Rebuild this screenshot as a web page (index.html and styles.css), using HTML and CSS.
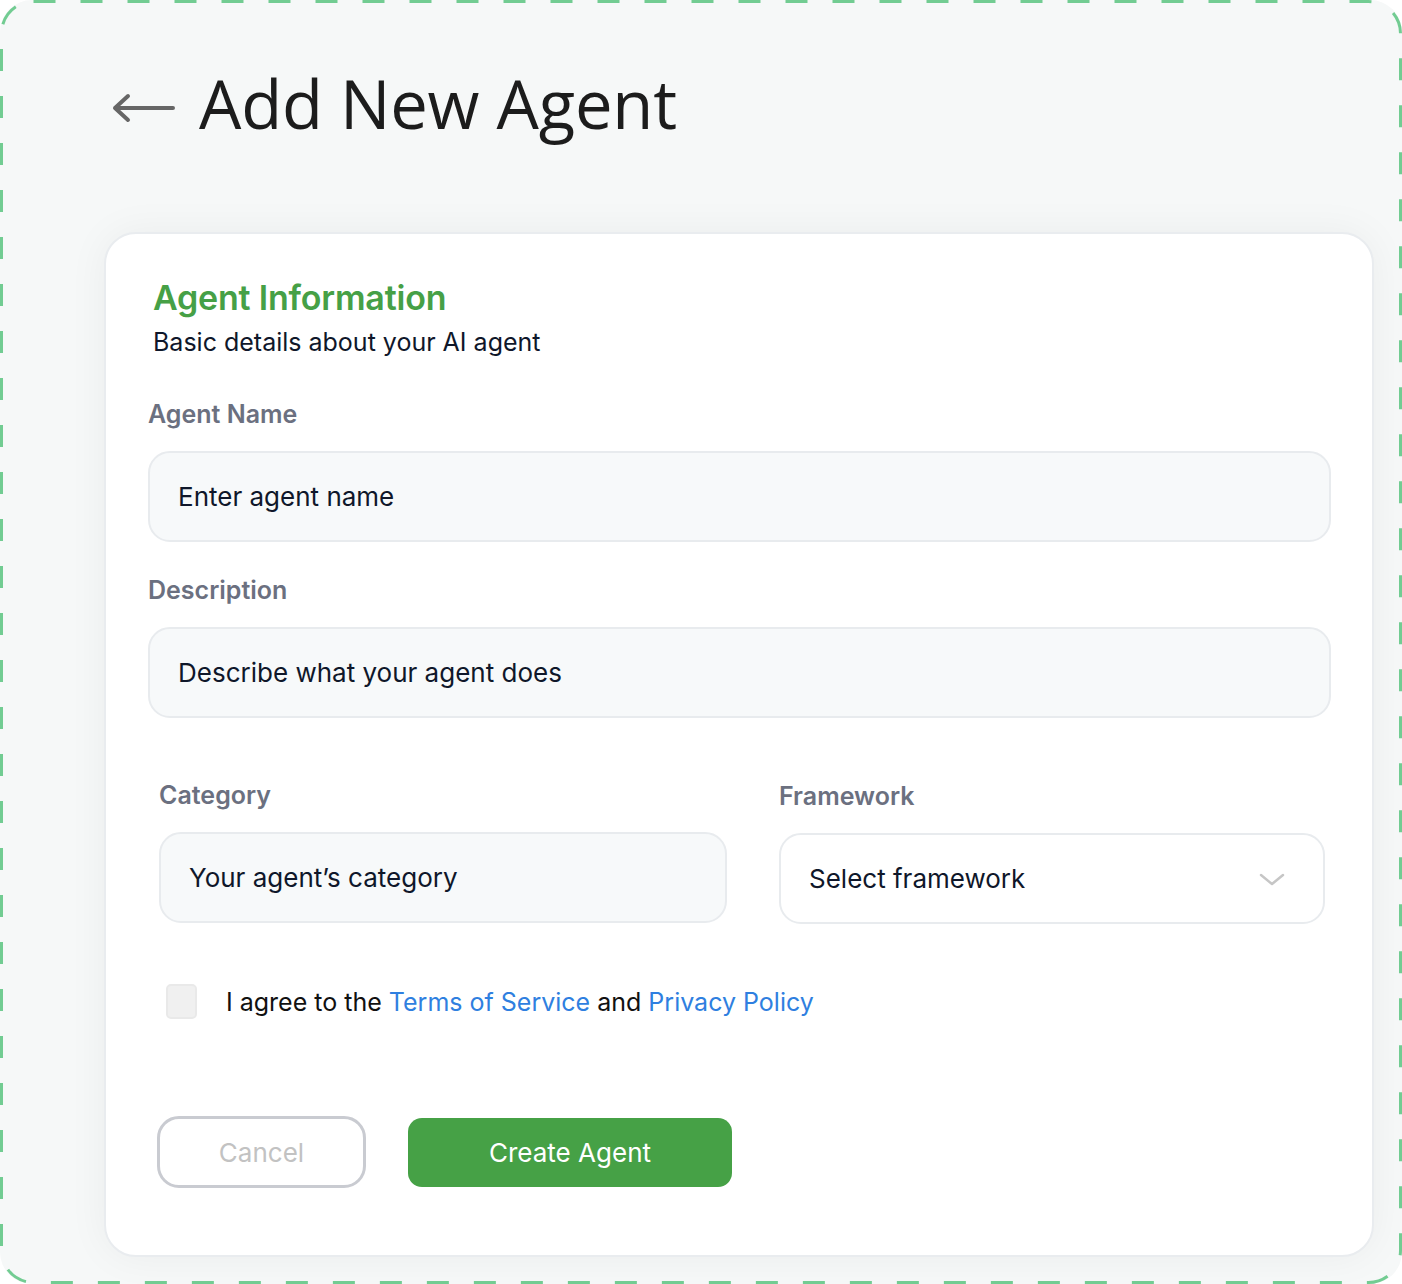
FILE: index.html
```html
<!DOCTYPE html>
<html lang="en">
<head>
<meta charset="utf-8">
<title>Add New Agent</title>
<link rel="stylesheet" href="styles.css">
</head>
<body>
<div class="frame">
  <svg class="frame-border" width="1402" height="1284" viewBox="0 0 1402 1284" aria-hidden="true">
    <rect x="1.5" y="1.5" width="1399" height="1281" rx="32" ry="32" fill="none" stroke="#72cc92" stroke-width="3" stroke-dasharray="22 25"/>
  </svg>
  <header class="page-header">
    <svg class="back-arrow" width="64" height="30" viewBox="0 0 64 30" aria-hidden="true">
      <path d="M3 15 H61 M3 15 L16 3 M3 15 L16 27" fill="none" stroke="#666" stroke-width="4" stroke-linecap="round" stroke-linejoin="round"/>
    </svg>
    <h1 class="page-title">Add New Agent</h1>
  </header>

  <section class="card">
    <div class="card-head">
      <h2 class="card-title">Agent Information</h2>
      <p class="card-sub">Basic details about your AI agent</p>
    </div>

    <div class="field">
      <label class="label">Agent Name</label>
      <div class="input">Enter agent name</div>
    </div>

    <div class="field">
      <label class="label">Description</label>
      <div class="input">Describe what your agent does</div>
    </div>

    <div class="row">
      <div class="col col-cat">
        <label class="label">Category</label>
        <div class="input">Your agent’s category</div>
      </div>
      <div class="col col-fw">
        <label class="label">Framework</label>
        <div class="input select">
          <span>Select framework</span>
          <svg width="26" height="14" viewBox="0 0 26 14" aria-hidden="true">
            <path d="M2 2 L13 11 L24 2" fill="none" stroke="#c6c6c6" stroke-width="2.5" stroke-linecap="round" stroke-linejoin="round"/>
          </svg>
        </div>
      </div>
    </div>

    <div class="agree">
      <span class="checkbox"></span>
      <span class="agree-text">I agree to the <a class="link">Terms of Service</a> and <a class="link">Privacy Policy</a></span>
    </div>

    <div class="actions">
      <button class="btn btn-cancel">Cancel</button>
      <button class="btn btn-create">Create Agent</button>
    </div>
  </section>
</div>
</body>
</html>
```

FILE: styles.css
```css
html, body {
  margin: 0;
  padding: 0;
  background: #ffffff;
}

body {
  font-family: "Inter", "Noto Sans", sans-serif;
  color: #0f172a;
}

.frame {
  position: relative;
  width: 1402px;
  height: 1284px;
  box-sizing: border-box;
  border-radius: 32px;
  background: #f6f8f8;
  padding: 68px 28px 27px 104px;
  display: flex;
  flex-direction: column;
}

.frame-border {
  position: absolute;
  left: 0;
  top: 0;
  pointer-events: none;
}

.page-header {
  display: flex;
  align-items: center;
  height: 70px;
  padding-left: 8px;
}

.back-arrow {
  margin-top: 10px;
  margin-right: 23px;
}

.page-title {
  margin: 0;
  font-family: "Open Sans", "Noto Sans", sans-serif;
  font-weight: 400;
  font-size: 67px;
  line-height: 70px;
  color: #1c1c1c;
  letter-spacing: -0.2px;
}

.card {
  margin-top: 94px;
  flex: 1;
  background: #ffffff;
  border: 2px solid #e9ecef;
  border-radius: 32px;
  box-shadow: 0 0 40px rgba(30, 40, 40, 0.05);
  padding: 42px 41px 0 42px;
  display: flex;
  flex-direction: column;
}

.card-head {
  padding-left: 5px;
}

.card-title {
  margin: 0;
  font-size: 34px;
  line-height: 44px;
  font-weight: 600;
  color: #46a046;
  letter-spacing: -0.2px;
}

.card-sub {
  margin: 6px 0 0;
  font-size: 25px;
  line-height: 32px;
  color: #0f172a;
}

.field {
  display: flex;
  flex-direction: column;
  margin-top: 40px;
}

.field + .field {
  margin-top: 32px;
}

.label {
  font-size: 25px;
  line-height: 32px;
  font-weight: 600;
  color: #6b7080;
}

.input {
  margin-top: 21px;
  height: 91px;
  box-sizing: border-box;
  border: 2px solid #e8ebee;
  border-radius: 22px;
  background: #f7f9fa;
  padding: 0 28px;
  display: flex;
  align-items: center;
  font-size: 26px;
  color: #0f172a;
}

.row {
  display: flex;
  gap: 52px;
  margin-top: 61px;
  padding-left: 11px;
  padding-right: 6px;
}

.col {
  display: flex;
  flex-direction: column;
}

.col-cat {
  width: 568px;
}

.col-fw {
  flex: 1;
  padding-top: 1px;
}

.input.select {
  background: #ffffff;
  justify-content: space-between;
  padding-right: 38px;
}

.input.select svg {
  margin-top: 2px;
}

.agree {
  display: flex;
  align-items: center;
  margin-top: 60px;
  padding-left: 18px;
  height: 35px;
}

.checkbox {
  width: 31px;
  height: 35px;
  box-sizing: border-box;
  border: 2px solid #e9e9e9;
  border-radius: 5px;
  background: #f0f0f0;
  margin-right: 29px;
}

.agree-text {
  font-size: 25px;
  color: #111111;
}

.link {
  color: #2f7fe0;
  text-decoration: none;
}

.actions {
  display: flex;
  align-items: center;
  gap: 42px;
  margin-top: 97px;
  padding-left: 9px;
}

.btn {
  font-family: "Inter", "Noto Sans", sans-serif;
  font-size: 26px;
  box-sizing: border-box;
  cursor: pointer;
}

.btn-cancel {
  width: 209px;
  height: 72px;
  border: 3px solid #c9cbd1;
  border-radius: 22px;
  background: #ffffff;
  color: #c2c2c2;
}

.btn-create {
  width: 324px;
  height: 69px;
  border: none;
  border-radius: 14px;
  background: #46a146;
  color: #ffffff;
}
```
